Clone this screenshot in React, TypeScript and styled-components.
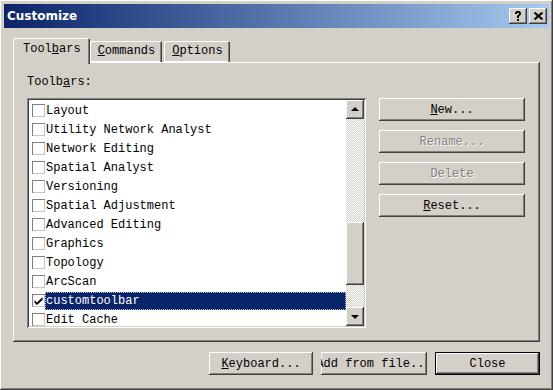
import styled, { createGlobalStyle, css } from "styled-components";

const GlobalStyle = createGlobalStyle`
    html, body {
        margin: 0;
        padding: 0;
        background: #d4d0c8;
    }
`;

const face = "#d4d0c8";
const mono = `"Liberation Mono", "DejaVu Sans Mono", monospace`;

const raised = css`
    box-shadow: inset -1px -1px #404040, inset 1px 1px #ffffff,
        inset -2px -2px #808080, inset 2px 2px ${face};
`;

const sunken = css`
    box-shadow: inset 1px 1px #808080, inset -1px -1px #ffffff,
        inset 2px 2px #404040, inset -2px -2px ${face};
`;

const Window = styled.div`
    box-sizing: border-box;
    width: 553px;
    height: 390px;
    padding: 4px;
    background: ${face};
    display: flex;
    flex-direction: column;
    font-family: ${mono};
    font-size: 12px;
    color: #000;
    box-shadow: inset -1px -1px #404040, inset 1px 1px #ffffff,
        inset -2px -2px #808080, inset 2px 2px ${face};
`;

const TitleBar = styled.div`
    height: 24px;
    display: flex;
    align-items: center;
    padding: 0 2px 0 3px;
    background: linear-gradient(to right, #0a246a, #a6caf0);
`;

const Title = styled.span`
    flex: 1;
    color: #fff;
    font-family: "DejaVu Sans", "Liberation Sans", sans-serif;
    font-weight: bold;
    font-size: 12px;
`;

const CaptionButton = styled.div`
    width: 18px;
    height: 16px;
    margin-left: 2px;
    background: ${face};
    display: flex;
    align-items: center;
    justify-content: center;
    ${raised};
    svg {
        display: block;
    }
`;

const TabRow = styled.div`
    display: flex;
    align-items: flex-end;
    height: 24px;
    margin: 10px 0 0 9px;
    position: relative;
    z-index: 2;
`;

const Tab = styled.div<{ $active?: boolean }>`
    box-sizing: border-box;
    height: ${(p) => (p.$active ? "26px" : "21px")};
    padding: ${(p) => (p.$active ? "4px 9px 0 10px" : "3px 7px 0 8px")};
    margin: ${(p) => (p.$active ? "0 0 -2px 0" : "0 2px 0 0")};
    background: ${face};
    border-top-left-radius: 2px;
    border-top-right-radius: 2px;
    box-shadow: ${(p) =>
        p.$active
            ? "inset 1px 1px #ffffff, inset -1px 0 #404040, inset -2px 0 #808080"
            : "inset 1px 1px #ffffff, inset -1px 0 #404040, inset -2px 0 #808080, inset 0 -1px #ffffff"};
    line-height: 14px;
    white-space: nowrap;
`;

const Panel = styled.div`
    box-sizing: border-box;
    width: 527px;
    height: 280px;
    margin-left: 9px;
    padding: 13px 14px 0;
    ${raised};
`;

const Label = styled.div`
    line-height: 14px;
    margin-bottom: 9px;
`;

const Content = styled.div`
    display: flex;
    gap: 13px;
`;

const ListBox = styled.div`
    box-sizing: border-box;
    width: 339px;
    height: 230px;
    padding: 2px;
    background: #fff;
    display: flex;
    ${sunken};
`;

const Rows = styled.div`
    flex: 1;
    overflow: hidden;
    padding-top: 1px;
`;

const Row = styled.div`
    height: 19px;
    display: flex;
    align-items: center;
    padding-left: 3px;
`;

const Check = styled.div`
    box-sizing: border-box;
    width: 13px;
    height: 13px;
    flex: none;
    background: #fff;
    display: flex;
    align-items: center;
    justify-content: center;
    box-shadow: inset 1px 1px #808080, inset -1px -1px #c8c4bc;
`;

const RowText = styled.div<{ $selected?: boolean }>`
    flex: 1;
    height: 18px;
    line-height: 18px;
    padding-left: 1px;
    white-space: nowrap;
    ${(p) =>
        p.$selected &&
        css`
            background: #0a246a;
            color: #fff;
            outline: 1px dotted #b8c0d8;
            outline-offset: -1px;
        `}
`;

const ScrollBar = styled.div`
    width: 18px;
    display: flex;
    flex-direction: column;
    background-color: #fff;
    background-image: conic-gradient(${face} 25%, #fff 0 50%, ${face} 0 75%, #fff 0);
    background-size: 2px 2px;
`;

const ScrollButton = styled.div`
    height: 19px;
    flex: none;
    background: ${face};
    display: flex;
    align-items: center;
    justify-content: center;
    ${raised};
`;

const Arrow = styled.div<{ $down?: boolean }>`
    width: 0;
    height: 0;
    border-left: 4px solid transparent;
    border-right: 4px solid transparent;
    ${(p) =>
        p.$down
            ? "border-top: 4px solid #000; margin-top: 1px;"
            : "border-bottom: 4px solid #000; margin-top: -1px;"}
`;

const TrackGap = styled.div<{ $size?: number }>`
    ${(p) => (p.$size ? `height: ${p.$size}px;` : "flex: 1;")}
`;

const Thumb = styled.div`
    height: 63px;
    flex: none;
    background: ${face};
    ${raised};
`;

const ButtonColumn = styled.div`
    display: flex;
    flex-direction: column;
    gap: 9px;
`;

const Button = styled.div<{ $width?: number; $disabled?: boolean; $default?: boolean }>`
    box-sizing: border-box;
    width: ${(p) => p.$width ?? 146}px;
    height: 23px;
    background: ${face};
    display: flex;
    align-items: center;
    justify-content: center;
    overflow: hidden;
    white-space: nowrap;
    ${(p) =>
        p.$default
            ? css`
                  box-shadow: inset 0 0 0 1px #000, inset -2px -2px #404040,
                      inset 2px 2px #ffffff, inset -3px -3px #808080;
              `
            : raised};
    ${(p) =>
        p.$disabled &&
        css`
            color: #808080;
            text-shadow: 1px 1px #ffffff;
        `}
`;

const Footer = styled.div`
    width: 527px;
    margin: 10px 0 0 9px;
    display: flex;
    justify-content: flex-end;
    gap: 8px;
`;

const toolbars = [
    "Layout",
    "Utility Network Analyst",
    "Network Editing",
    "Spatial Analyst",
    "Versioning",
    "Spatial Adjustment",
    "Advanced Editing",
    "Graphics",
    "Topology",
    "ArcScan",
    "customtoolbar",
    "Edit Cache",
];

function CheckMark() {
    return (
        <svg width="9" height="9" viewBox="0 0 9 9">
            <path d="M0.5 4 L3 6.5 L8.5 1 V4 L3 9 L0.5 6.8 Z" fill="#000" />
        </svg>
    );
}

export default function App() {
    return (
        <>
            <GlobalStyle />
            <Window>
                <TitleBar>
                    <Title>Customize</Title>
                    <CaptionButton>
                        <svg width="8" height="10" viewBox="0 0 8 10">
                            <path d="M1 3 V1.5 L2.5 0 H5.5 L7 1.5 V3.5 L5 5.5 V7 H3 V5 L5 3 V2 H3 V3 Z M3 8 H5 V10 H3 Z" fill="#000" />
                        </svg>
                    </CaptionButton>
                    <CaptionButton>
                        <svg width="9" height="8" viewBox="0 0 9 8">
                            <path d="M0.5 0.5 L8.5 7.5 M8.5 0.5 L0.5 7.5" stroke="#000" strokeWidth="2" />
                        </svg>
                    </CaptionButton>
                </TitleBar>
                <TabRow>
                    <Tab $active>Tool<u>b</u>ars</Tab>
                    <Tab><u>C</u>ommands</Tab>
                    <Tab><u>O</u>ptions</Tab>
                </TabRow>
                <Panel>
                    <Label>Toolb<u>a</u>rs:</Label>
                    <Content>
                        <ListBox>
                            <Rows>
                                {toolbars.map((name) => (
                                    <Row key={name}>
                                        <Check>{name === "customtoolbar" && <CheckMark />}</Check>
                                        <RowText $selected={name === "customtoolbar"}>{name}</RowText>
                                    </Row>
                                ))}
                            </Rows>
                            <ScrollBar>
                                <ScrollButton>
                                    <Arrow />
                                </ScrollButton>
                                <TrackGap $size={103} />
                                <Thumb />
                                <TrackGap />
                                <ScrollButton>
                                    <Arrow $down />
                                </ScrollButton>
                            </ScrollBar>
                        </ListBox>
                        <ButtonColumn>
                            <Button><u>N</u>ew...</Button>
                            <Button $disabled>Rename...</Button>
                            <Button $disabled>Delete</Button>
                            <Button><u>R</u>eset...</Button>
                        </ButtonColumn>
                    </Content>
                </Panel>
                <Footer>
                    <Button $width={104}><u>K</u>eyboard...</Button>
                    <Button $width={106}><span>Add from file...</span></Button>
                    <Button $width={105} $default>Close</Button>
                </Footer>
            </Window>
        </>
    );
}
